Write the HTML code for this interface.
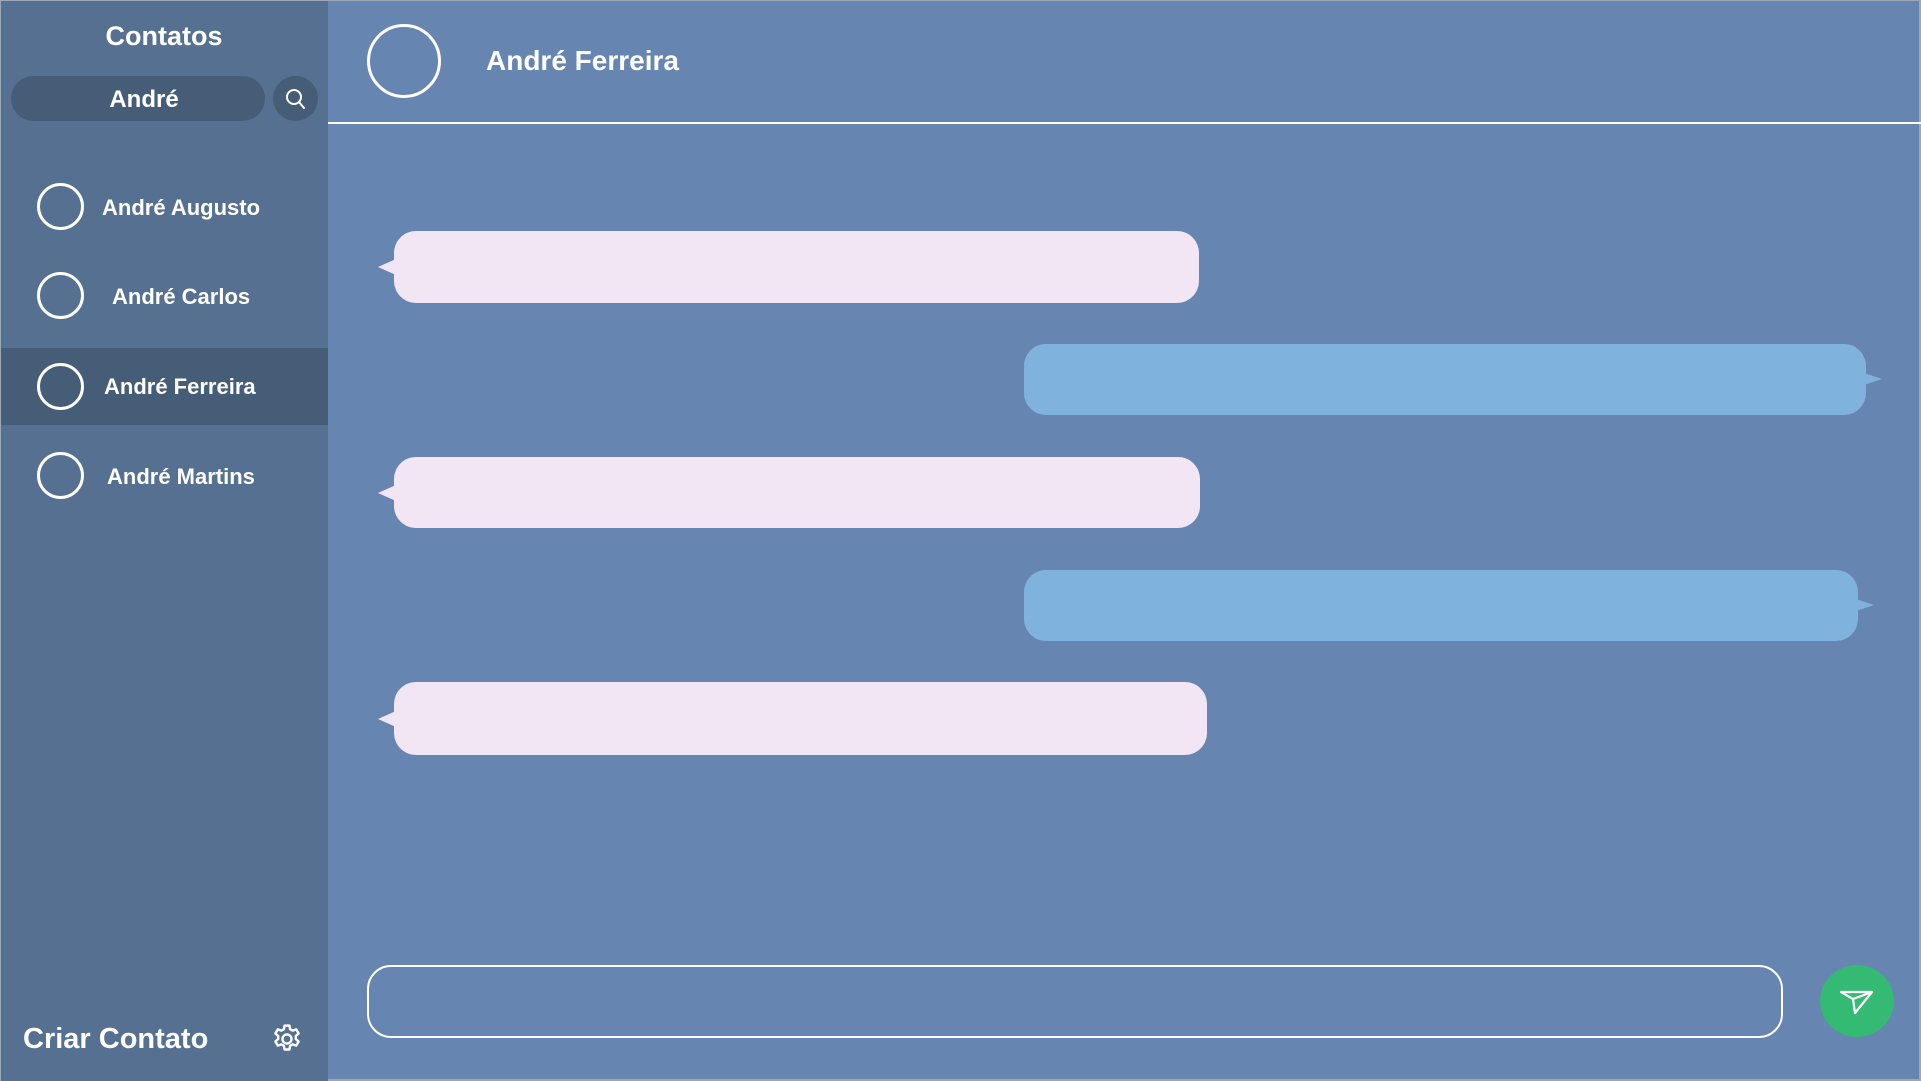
<!DOCTYPE html>
<html><head><meta charset="utf-8"><style>
*{margin:0;padding:0;box-sizing:border-box}
body{width:1921px;height:1081px;overflow:hidden;background:#6685b0;font-family:"Liberation Sans",sans-serif;color:#fff;position:relative}
.abs{position:absolute}
#side{left:0;top:0;width:328px;height:1081px;background:#557090;border-left:1px solid #9aa8ba;border-top:1px solid #9aa8ba}
.t{position:absolute;white-space:nowrap;font-weight:bold}
.circ{position:absolute;border:3px solid #fff;border-radius:50%}
.bub{position:absolute;border-radius:22px}
.pink{background:#f2e6f4}
.blue{background:#80b2de}
</style></head><body>
<div id="side" class="abs"></div>
<div class="t" style="left:0;width:328px;text-align:center;top:21px;font-size:27px">Contatos</div>
<div class="abs" style="left:11px;top:76px;width:254px;height:45px;border-radius:23px;background:#465d77"></div>
<div class="t" style="left:11px;width:266px;text-align:center;top:86px;font-size:24px">André</div>
<div class="abs" style="left:273px;top:76px;width:45px;height:45px;border-radius:50%;background:#465d77"></div>
<svg class="abs" style="left:282px;top:85px" width="28" height="28" viewBox="0 0 28 28"><circle cx="12" cy="12" r="7" fill="none" stroke="#fff" stroke-width="2"/><line x1="17" y1="17" x2="22" y2="23" stroke="#fff" stroke-width="2" stroke-linecap="round"/></svg>

<div class="abs" style="left:1px;top:348px;width:327px;height:77px;background:#465d77"></div>
<div class="circ" style="left:37px;top:183px;width:47px;height:47px"></div>
<div class="t" style="left:102px;top:195px;font-size:22px">André Augusto</div>
<div class="circ" style="left:37px;top:272px;width:47px;height:47px"></div>
<div class="t" style="left:112px;top:284px;font-size:22px">André Carlos</div>
<div class="circ" style="left:37px;top:363px;width:47px;height:47px"></div>
<div class="t" style="left:104px;top:374px;font-size:22px">André Ferreira</div>
<div class="circ" style="left:37px;top:452px;width:47px;height:47px"></div>
<div class="t" style="left:107px;top:464px;font-size:22px">André Martins</div>

<div class="t" style="left:23px;top:1023px;font-size:29px">Criar Contato</div>
<svg class="abs" style="left:270px;top:1022px" width="34" height="34" viewBox="0 0 24 24" fill="none" stroke="#fff" stroke-width="1.7" stroke-linejoin="round"><path d="M10.3 2.5h3.4l.5 2.6 1.8 1 2.5-.9 1.7 2.9-2 1.8v2.1l2 1.8-1.7 2.9-2.5-.9-1.8 1-.5 2.6h-3.4l-.5-2.6-1.8-1-2.5.9-1.7-2.9 2-1.8V9.9l-2-1.8 1.7-2.9 2.5.9 1.8-1z"/><circle cx="12" cy="12" r="3.2"/></svg>

<div class="abs" style="left:328px;top:0;width:1593px;height:1px;background:#9aa8ba"></div>
<div class="abs" style="left:1919px;top:0;width:2px;height:1081px;background:#9aa8ba"></div>
<div class="abs" style="left:328px;top:1079px;width:1593px;height:2px;background:#9aa8ba"></div>
<div class="circ" style="left:367px;top:24px;width:74px;height:74px"></div>
<div class="t" style="left:486px;top:45px;font-size:28px">André Ferreira</div>
<div class="abs" style="left:328px;top:122px;width:1593px;height:2px;background:#fff"></div>

<div class="bub pink" style="left:394px;top:231px;width:805px;height:72px"></div>
<svg class="abs" style="left:378px;top:259px" width="18" height="16"><polygon points="0,8 18,0 18,16" fill="#f2e6f4"/></svg>
<div class="bub blue" style="left:1024px;top:344px;width:842px;height:71px"></div>
<svg class="abs" style="left:1864px;top:371px" width="18" height="16"><polygon points="18,8 0,2 0,14" fill="#80b2de"/></svg>
<div class="bub pink" style="left:394px;top:457px;width:806px;height:71px"></div>
<svg class="abs" style="left:378px;top:485px" width="18" height="16"><polygon points="0,8 18,0 18,16" fill="#f2e6f4"/></svg>
<div class="bub blue" style="left:1024px;top:570px;width:834px;height:71px"></div>
<svg class="abs" style="left:1856px;top:597px" width="18" height="16"><polygon points="18,8 0,2 0,14" fill="#80b2de"/></svg>
<div class="bub pink" style="left:394px;top:682px;width:813px;height:73px"></div>
<svg class="abs" style="left:378px;top:711px" width="18" height="16"><polygon points="0,8 18,0 18,16" fill="#f2e6f4"/></svg>

<div class="abs" style="left:367px;top:965px;width:1416px;height:73px;border:2px solid #fff;border-radius:24px"></div>
<div class="abs" style="left:1820px;top:965px;width:74px;height:72px;border-radius:50%;background:#34ba72"></div>
<svg class="abs" style="left:1838px;top:985px" width="38" height="34" viewBox="0 0 38 34" fill="none" stroke="#fff" stroke-width="2.2" stroke-linejoin="round"><path d="M3 7H34L17 28L15 14Z M15 14L34 7"/></svg>
</body></html>
